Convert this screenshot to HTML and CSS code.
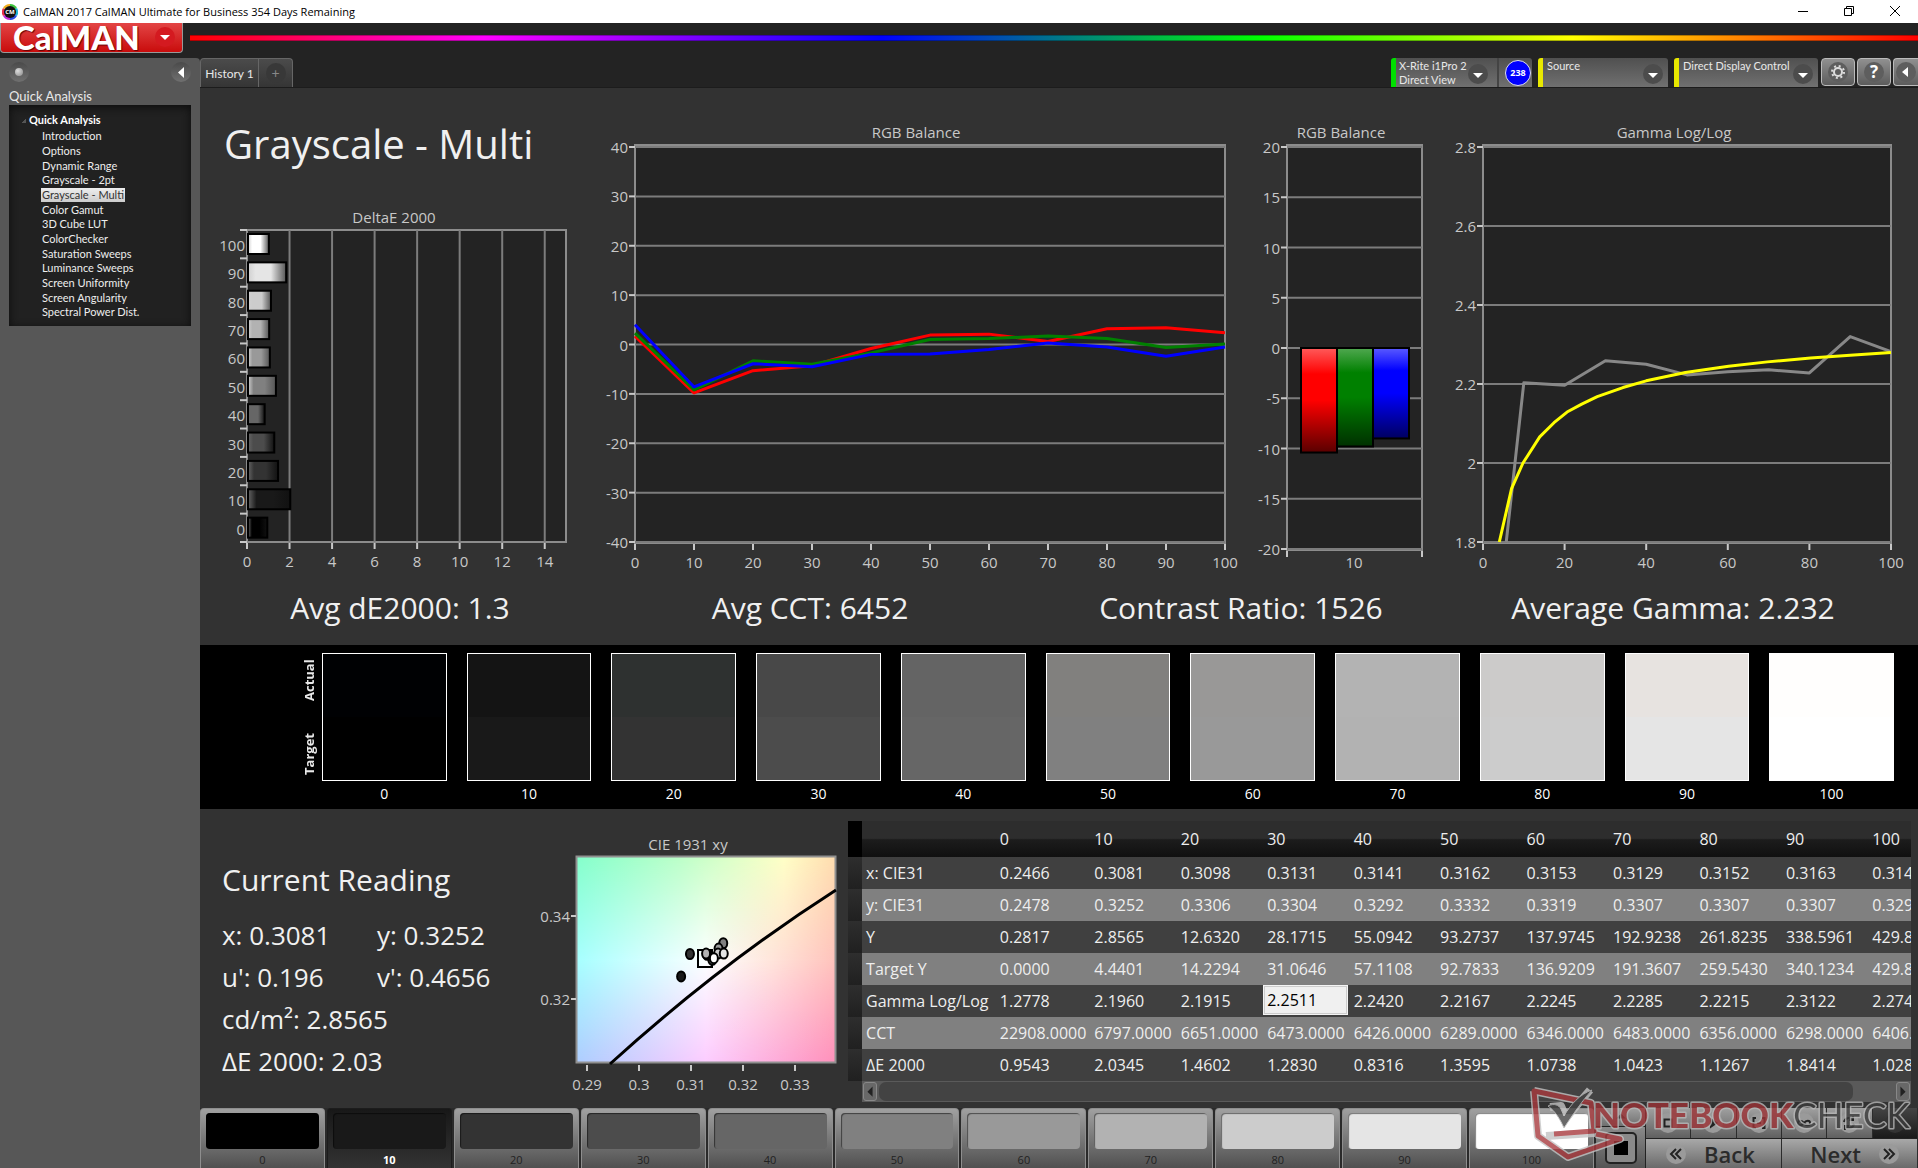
FILE: index.html
```
<!DOCTYPE html>
<html lang="en">

<head>
  <meta charset="UTF-8">
  <meta name="viewport" content="width=device-width, initial-scale=1.0">
  <title>CalMAN 2017</title>
  <link rel="stylesheet" href="styles.css">
</head>

<body>
  <header class="titlebar">
    <svg class="app-icon" viewBox="0 0 16 16">
      <path d="M8 0a8 8 0 0 1 7 4L8 8z" fill="#3fc43f"/>
      <path d="M15 4a8 8 0 0 1 0 8L8 8z" fill="#1fb5d8"/>
      <path d="M15 12a8 8 0 0 1-7 4V8z" fill="#2a4be0"/>
      <path d="M8 16a8 8 0 0 1-7-4l7-4z" fill="#c030d8"/>
      <path d="M1 12a8 8 0 0 1 0-8l7 4z" fill="#e8304a"/>
      <path d="M1 4a8 8 0 0 1 7-4v8z" fill="#f0b020"/>
      <circle cx="8" cy="8" r="6" fill="#111"/>
      <text x="8" y="10" text-anchor="middle" class="app-icon-text">CM</text>
    </svg>
    <span class="titlebar-text">CalMAN 2017 CalMAN Ultimate for Business 354 Days Remaining</span>
    <div class="window-buttons">
      <button class="window-btn" aria-label="Minimize"><svg viewBox="0 0 12 12"><path d="M1 6.5h10" stroke="#000"/></svg></button>
      <button class="window-btn" aria-label="Restore"><svg viewBox="0 0 12 12"><path d="M1.500 3.500h7v7h-7zM3.500 3.500v-2h7v7h-2" fill="none" stroke="#000"/></svg></button>
      <button class="window-btn" aria-label="Close"><svg viewBox="0 0 12 12"><path d="M1 1l10 10M11 1L1 11" stroke="#000"/></svg></button>
    </div>
  </header>

  <div class="brandbar">
    <button class="brand-btn">CalMAN
      <span class="brand-arrow"><svg viewBox="0 0 20 20"><path d="M5 8h10l-5 5z" fill="#fff"/></svg></span>
    </button>
    <div class="rainbow"></div>
  </div>

  <div class="app">
    <aside class="sidebar">
      <div class="sidebar-tools">
        <button class="round-btn" aria-label="Pin"><span class="pin-dot"></span></button>
        <button class="round-btn" aria-label="Collapse"><svg viewBox="0 0 20 20"><path d="M13 5v11l-6-5.500z" fill="#fff"/></svg></button>
      </div>
      <h2 class="sidebar-title">Quick Analysis</h2>
      <nav class="tree">
        <p class="tree-root">Quick Analysis</p>
        <ul class="tree-list">
          <li><a href="#">Introduction</a></li>
          <li><a href="#">Options</a></li>
          <li><a href="#">Dynamic Range</a></li>
          <li><a href="#">Grayscale - 2pt</a></li>
          <li><a href="#" class="active">Grayscale - Multi</a></li>
          <li><a href="#">Color Gamut</a></li>
          <li><a href="#">3D Cube LUT</a></li>
          <li><a href="#">ColorChecker</a></li>
          <li><a href="#">Saturation Sweeps</a></li>
          <li><a href="#">Luminance Sweeps</a></li>
          <li><a href="#">Screen Uniformity</a></li>
          <li><a href="#">Screen Angularity</a></li>
          <li><a href="#">Spectral Power Dist.</a></li>
        </ul>
      </nav>
    </aside>

    <main class="main">
      <div class="tabbar">
        <button class="tab">History 1</button>
        <button class="tab tab-add" aria-label="Add tab"><span>+</span></button>
        <div class="devices">
          <button class="device device-meter">
            <span class="device-name">X-Rite i1Pro 2<br>Direct View</span>
            <svg class="arrow" viewBox="0 0 20 20"><circle cx="10" cy="10" r="10"/><path d="M5 9h10l-5 5z"/></svg>
          </button>
          <div class="device-count"><span>238</span></div>
          <button class="device device-source">
            <span class="device-name">Source</span>
            <svg class="arrow" viewBox="0 0 20 20"><circle cx="10" cy="10" r="10"/><path d="M5 9h10l-5 5z"/></svg>
          </button>
          <button class="device device-display">
            <span class="device-name">Direct Display Control</span>
            <svg class="arrow" viewBox="0 0 20 20"><circle cx="10" cy="10" r="10"/><path d="M5 9h10l-5 5z"/></svg>
          </button>
          <button class="tool-btn" aria-label="Settings"><svg viewBox="0 0 20 20"><circle class="tool-bg" cx="10" cy="10" r="10"/><circle cx="10" cy="10" r="4" fill="none" stroke="#ddd" stroke-width="2"/><circle cx="10" cy="10" r="6" fill="none" stroke="#ddd" stroke-width="2" stroke-dasharray="2 2.712"/></svg></button>
          <button class="tool-btn tool-help" aria-label="Help"><span>?</span></button>
          <button class="tool-btn tool-last" aria-label="Collapse panel"><svg viewBox="0 0 20 20"><circle class="tool-bg" cx="10" cy="10" r="10"/><path d="M12 5v10l-6-5z" fill="#fff"/></svg></button>
        </div>
      </div>

      <section class="charts">
        <div class="chart-col">
          <h1 class="page-title">Grayscale - Multi</h1>
          <svg class="chart" id="deltaChart" viewBox="0 0 390 385"></svg>
        </div>
        <svg class="chart chart-tall" id="rgbChart" viewBox="0 0 660 465"></svg>
        <svg class="chart chart-tall" id="rgbBars" viewBox="0 0 180 465"></svg>
        <svg class="chart chart-tall" id="gammaChart" viewBox="0 0 488 465"></svg>
      </section>

      <section class="stats">
        <p>Avg dE2000: 1.3</p>
        <p>Avg CCT: 6452</p>
        <p>Contrast Ratio: 1526</p>
        <p>Average Gamma: 2.232</p>
      </section>

      <section class="swatches">
        <div class="swatch-side"><span>Actual</span><span>Target</span></div>
        <div class="swatch-row" id="swatchRow"></div>
      </section>

      <section class="bottom">
        <div class="reading">
          <h2>Current Reading</h2>
          <div class="reading-grid">
            <div>x: 0.3081</div>
            <div>y: 0.3252</div>
            <div>u': 0.196</div>
            <div>v': 0.4656</div>
            <div class="wide">cd/m²: 2.8565</div>
            <div class="wide">ΔE 2000: 2.03</div>
          </div>
        </div>

        <svg class="chart" id="cieChart" viewBox="0 0 313 299">
          <defs>
            <linearGradient id="cieTop"><stop offset="0" stop-color="#84ffcb"/><stop offset=".4" stop-color="#bbffc8"/><stop offset=".8" stop-color="#ffffc6"/><stop offset="1" stop-color="#ffdcae"/></linearGradient>
            <linearGradient id="cieMid"><stop offset="0" stop-color="#a6ffff"/><stop offset=".5" stop-color="#fcffff"/><stop offset=".75" stop-color="#ffe6dc"/><stop offset="1" stop-color="#ffc3bc"/></linearGradient>
            <linearGradient id="cieLow"><stop offset="0" stop-color="#adcdff"/><stop offset=".5" stop-color="#fcccff"/><stop offset="1" stop-color="#ff8fba"/></linearGradient>
            <linearGradient id="fadeDown" x2="0" y2="1"><stop offset="0" stop-color="#fff"/><stop offset=".5" stop-color="#000"/></linearGradient>
            <linearGradient id="fadeUp" x2="0" y2="1"><stop offset=".5" stop-color="#000"/><stop offset="1" stop-color="#fff"/></linearGradient>
            <mask id="maskTop"><rect x="41" y="47" width="260" height="207" fill="url(#fadeDown)"/></mask>
            <mask id="maskLow"><rect x="41" y="47" width="260" height="207" fill="url(#fadeUp)"/></mask>
          </defs>
          <rect x="41" y="47" width="260" height="207" fill="url(#cieMid)"/>
          <rect x="41" y="47" width="260" height="207" fill="url(#cieTop)" mask="url(#maskTop)"/>
          <rect x="41" y="47" width="260" height="207" fill="url(#cieLow)" mask="url(#maskLow)"/>
          <rect x="41.500" y="47.500" width="259" height="206" fill="none" stroke="#909090" stroke-width="2"/>
          <path d="M75 255Q184 156 301 81" fill="none" stroke="#000" stroke-width="3"/>
        </svg>

        <div class="data-panel">
          <div class="table-scroll">
            <table class="data-table">
              <thead>
                <tr><th class="gutter"></th><th class="name"></th><th class="first">0</th><th>10</th><th>20</th><th>30</th><th>40</th><th>50</th><th>60</th><th>70</th><th>80</th><th>90</th><th>100</th></tr>
              </thead>
              <tbody>
                <tr><td class="gutter"></td><th scope="row">x: CIE31</th><td>0.2466</td><td>0.3081</td><td>0.3098</td><td>0.3131</td><td>0.3141</td><td>0.3162</td><td>0.3153</td><td>0.3129</td><td>0.3152</td><td>0.3163</td><td>0.3144</td></tr>
                <tr><td class="gutter"></td><th scope="row">y: CIE31</th><td>0.2478</td><td>0.3252</td><td>0.3306</td><td>0.3304</td><td>0.3292</td><td>0.3332</td><td>0.3319</td><td>0.3307</td><td>0.3307</td><td>0.3307</td><td>0.3296</td></tr>
                <tr><td class="gutter"></td><th scope="row">Y</th><td>0.2817</td><td>2.8565</td><td>12.6320</td><td>28.1715</td><td>55.0942</td><td>93.2737</td><td>137.9745</td><td>192.9238</td><td>261.8235</td><td>338.5961</td><td>429.8232</td></tr>
                <tr><td class="gutter"></td><th scope="row">Target Y</th><td>0.0000</td><td>4.4401</td><td>14.2294</td><td>31.0646</td><td>57.1108</td><td>92.7833</td><td>136.9209</td><td>191.3607</td><td>259.5430</td><td>340.1234</td><td>429.8232</td></tr>
                <tr><td class="gutter"></td><th scope="row">Gamma Log/Log</th><td>1.2778</td><td>2.1960</td><td>2.1915</td><td class="selected"><input class="cell-input" type="text" value="2.2511" aria-label="Gamma at 30"></td><td>2.2420</td><td>2.2167</td><td>2.2245</td><td>2.2285</td><td>2.2215</td><td>2.3122</td><td>2.2749</td></tr>
                <tr><td class="gutter"></td><th scope="row">CCT</th><td>22908.0000</td><td>6797.0000</td><td>6651.0000</td><td>6473.0000</td><td>6426.0000</td><td>6289.0000</td><td>6346.0000</td><td>6483.0000</td><td>6356.0000</td><td>6298.0000</td><td>6406.0000</td></tr>
                <tr><td class="gutter"></td><th scope="row">ΔE 2000</th><td>0.9543</td><td>2.0345</td><td>1.4602</td><td>1.2830</td><td>0.8316</td><td>1.3595</td><td>1.0738</td><td>1.0423</td><td>1.1267</td><td>1.8414</td><td>1.0286</td></tr>
              </tbody>
            </table>
          </div>
          <div class="hscroll">
            <button class="hscroll-btn" aria-label="Scroll left"><svg viewBox="0 0 14 18"><path d="M10 3v12L4 9z"/></svg></button>
            <div class="hscroll-track"><div class="hscroll-thumb"></div></div>
            <button class="hscroll-btn" aria-label="Scroll right"><svg viewBox="0 0 14 18"><path d="M4 3v12l6-6z"/></svg></button>
          </div>
        </div>
      </section>

      <footer class="footer">
        <div class="patterns" id="patterns"></div>
        <div class="side-buttons">
          <button class="side-up" aria-label="Up"><svg viewBox="0 0 20 20"><path d="M4 13l6-6 6 6z"/></svg></button>
          <button class="side-stop" aria-label="Stop pattern"><svg viewBox="0 0 32 32"><rect x="1" y="1" width="30" height="30" rx="4" fill="#8a8a8a" stroke="#222" stroke-width="2"/><rect x="9" y="9" width="14" height="14" fill="#000"/></svg></button>
        </div>
        <div class="controls">
          <div class="transport">
            <button aria-label="Stop"><svg viewBox="0 0 20 20"><circle cx="10" cy="10" r="10"/><path d="M6.500 6.500h7v7h-7z" class="line"/></svg></button>
            <button aria-label="Play"><svg viewBox="0 0 20 20"><circle cx="10" cy="10" r="10"/><path d="M7 4.500l8 5.500-8 5.500z"/></svg></button>
            <button aria-label="Read series"><svg viewBox="0 0 20 20"><circle cx="10" cy="10" r="10"/><path d="M7 5H4.500v10H7M13 5h2.500v10H13M8 10h4" class="line"/></svg></button>
            <button aria-label="Continuous"><svg viewBox="0 0 20 20"><circle cx="10" cy="10" r="10"/><path d="M10 10c-2-3-6-3-6 0s4 3 6 0 6-3 6 0-4 3-6 0z" class="line"/></svg></button>
            <button aria-label="Refresh"><svg viewBox="0 0 20 20"><circle cx="10" cy="10" r="10"/><path d="M5 9c1-5 8-5 9-2M14 3v4h-4M15 11c-1 5-8 5-9 2M6 17v-4h4" class="line"/></svg></button>
            <button class="off" aria-label="Record" disabled><svg viewBox="0 0 20 20"><circle cx="10" cy="10" r="10"/></svg></button>
          </div>
          <div class="paging">
            <button><svg viewBox="0 0 20 20"><circle cx="10" cy="10" r="10"/><path d="M10 5l-5 5 5 5M15 5l-5 5 5 5" class="line"/></svg>Back</button>
            <button class="next">Next<svg viewBox="0 0 20 20"><circle cx="10" cy="10" r="10"/><path d="M5 5l5 5-5 5M10 5l5 5-5 5" class="line"/></svg></button>
          </div>
        </div>

        <svg class="watermark" viewBox="0 0 390 80">
          <g class="mark-shadow">
            <path d="M6 8l57 12 3 30-48 3M6 8l4 45 30 21 52-18-24-5"/>
            <path d="M22 24l11-1 5 12L62 7"/>
          </g>
          <path class="mark-box" d="M26 51l40-3-3-28L6 8l4 45 30 21 52-18-24-5"/>
          <path class="mark-check" d="M20 23c6-3 11-1 13 3l3 7C42 22 52 11 64 7 54 18 46 30 36 45 32 36 27 28 20 23z"/>
          <text x="65" y="45"><tspan class="mark-red">NOTEBOOK</tspan><tspan class="mark-dark">CHECK</tspan></text>
        </svg>
      </footer>
    </main>
  </div>

  <script src="charts.js"></script>
</body>

</html>
```
FILE: styles.css
```
* {
  box-sizing: border-box;
}

body {
  margin: 0;
  min-height: 100vh;
  display: flex;
  flex-direction: column;
  background: #232323;
  color: #e8e8e8;
  font-family: "Open Sans", "Noto Sans", sans-serif;
  font-size: 12px;
  overflow-x: hidden;
}

button {
  margin: 0;
  padding: 0;
  border: none;
  background: none;
  color: inherit;
  font-family: inherit;
  cursor: pointer;
}

h1, h2, p, ul {
  margin: 0;
  padding: 0;
  font-weight: normal;
}

/* window title bar */
.titlebar {
  display: flex;
  align-items: center;
  height: 23px;
  padding-left: 2px;
  background: #fff;
  color: #000;
}

.app-icon {
  width: 16px;
  height: 16px;
  margin-right: 5px;
}

.app-icon-text {
  font: bold 6px "Open Sans", sans-serif;
  fill: #fff;
}

.titlebar-text {
  font-family: "Open Sans", sans-serif;
  font-size: 11px;
}

.window-buttons {
  display: flex;
  margin-left: auto;
}

.window-btn {
  width: 46px;
  height: 22px;
}

.window-btn svg {
  width: 12px;
  height: 12px;
}

/* brand button and colour strip */
.brandbar {
  display: flex;
  align-items: flex-start;
  gap: 7px;
  height: 35px;
}

.brand-btn {
  display: flex;
  align-items: center;
  justify-content: space-between;
  width: 183px;
  height: 30px;
  padding: 0 7px 2px 12px;
  border: 1px solid #999;
  border-top: none;
  border-radius: 0 0 4px 4px;
  background: linear-gradient(#e34545, #c90c0c);
  color: #fff;
  font-family: Lato, sans-serif;
  font-size: 33px;
  font-weight: 900;
  line-height: 28px;
  text-shadow: 1px 1px 1px #600;
}

.brand-arrow svg {
  display: block;
  width: 20px;
  height: 20px;
  border-radius: 50%;
  background: #d41a20;
}

.rainbow {
  flex: 1;
  height: 6px;
  margin-top: 12px;
  border: 1px solid rgba(0, 0, 0, 0.3);
  border-width: 1px 0;
  background: linear-gradient(90deg, #f00, #f0f 17%, #00f 40%, #0f0 62%, #ff0 80%, #f00);
}

.app {
  flex: 1;
  display: flex;
}

/* sidebar */
.sidebar {
  width: 200px;
  flex-shrink: 0;
  padding: 4px 9px;
  border-radius: 0 4px 0 0;
  background: #575757;
  font-family: Lato, sans-serif;
}

.sidebar-tools {
  display: flex;
  justify-content: space-between;
}

.round-btn {
  display: flex;
  align-items: center;
  justify-content: center;
  width: 20px;
  height: 20px;
  border-radius: 50%;
  background: linear-gradient(#4a4a4a, #707070);
}

.round-btn svg {
  width: 20px;
}

.pin-dot {
  width: 8px;
  height: 8px;
  border-radius: 50%;
  background: radial-gradient(circle at 35% 35%, #ddd, #888);
}

.sidebar-title {
  margin-top: 5px;
  font-size: 13px;
  line-height: 18px;
}

.tree {
  height: 221px;
  padding: 6px 0 0 8px;
  background: #212121;
  box-shadow: inset 0 2px 8px #0c0c0c;
}

.tree-root {
  padding-left: 12px;
  font-size: 11px;
  font-weight: bold;
  line-height: 17px;
  color: #fff;
  background: linear-gradient(135deg, transparent 50%, #555 50%) 4px 7px / 5px 5px no-repeat;
}

.tree-list {
  list-style: none;
  padding-left: 24px;
}

.tree-list li {
  height: 15px;
  line-height: 15px;
}

.tree-list li:nth-child(3n) {
  height: 14px;
}

.tree-list a {
  display: inline-block;
  padding: 0 1px;
  color: #eee;
  font-size: 11px;
  line-height: 14px;
  text-decoration: none;
}

.tree-list .active {
  background: linear-gradient(#eee, #ccc);
  color: #333;
}

/* tab bar */
.main {
  flex: 1;
  min-width: 0;
  background: #323232;
}

.tabbar {
  display: flex;
  height: 30px;
  border-bottom: 1px solid #1c1c1c;
  background: #232323;
}

.tab {
  width: 59px;
  border: 1px solid #666;
  border-bottom: none;
  border-radius: 4px 0 0 0;
  background: linear-gradient(#4b4b4b, #353535);
  font-family: Lato, sans-serif;
  font-size: 12px;
}

.tab-add {
  width: 34px;
  border-left: none;
  border-radius: 0 4px 0 0;
}

.tab-add span {
  display: inline-block;
  width: 20px;
  border-radius: 50%;
  background: #383838;
  color: #888;
  font-size: 14px;
  line-height: 20px;
}

.devices {
  display: flex;
  margin-left: auto;
}

.device {
  display: flex;
  align-items: flex-start;
  justify-content: space-between;
  padding: 1px 5px 0 4px;
  border-left: 5px solid #e8e800;
  border-radius: 3px 3px 0 0;
  background: linear-gradient(#505050, #707070);
  text-align: left;
  font-family: Lato, sans-serif;
  font-size: 11px;
  line-height: 14px;
  white-space: nowrap;
}

.device-meter {
  width: 106px;
  padding: 1px 9px 0 3px;
  border-left-color: #00e000;
  border-radius: 3px 0 0 0;
}

.device-count {
  width: 35px;
  margin-right: 6px;
  padding: 2px 0 0 6px;
  border-left: 2px solid #444;
  border-radius: 0 3px 0 0;
  background: linear-gradient(#505050, #707070);
}

.device-count span {
  display: block;
  width: 26px;
  height: 26px;
  border: 1px solid #dde;
  border-radius: 50%;
  background: #00f;
  color: #fff;
  font-size: 9px;
  font-weight: bold;
  line-height: 24px;
  text-align: center;
}

.device-source {
  width: 130px;
  margin-right: 6px;
}

.device-display {
  width: 144px;
  margin-right: 3px;
}

.arrow {
  flex-shrink: 0;
  width: 20px;
  height: 20px;
  margin-top: 5px;
}

.arrow circle {
  fill: #4c4c4c;
}

.arrow path {
  fill: #fff;
}

.tool-btn {
  width: 34px;
  height: 28px;
  margin-right: 2px;
  border: 1px solid #bbb;
  border-radius: 4px;
  background: linear-gradient(#909090, #5c5c5c);
}

.tool-btn svg {
  display: block;
  width: 20px;
  margin: 0 auto;
}

.tool-bg {
  fill: #5e5e5e;
}

.tool-help span {
  display: block;
  width: 20px;
  margin: 0 auto;
  border-radius: 50%;
  background: #5e5e5e;
  color: #fff;
  font-size: 17px;
  font-weight: bold;
  line-height: 20px;
}

.tool-last {
  width: 25px;
  margin-right: 0;
  border-right: none;
  border-radius: 4px 0 0 4px;
}

/* charts */
.charts {
  display: grid;
  grid-template-columns: 390fr 660fr 180fr 488fr;
}

.page-title {
  padding: 28px 0 0 24px;
  height: 112px;
  font-size: 40px;
  line-height: 56px;
  color: #f0f0f0;
  white-space: nowrap;
}

.chart {
  display: block;
  width: 100%;
}

.chart-tall {
  padding-top: 32px;
}

.chart text {
  font-size: 15px;
  fill: #c8c8c8;
}

.plot-bg {
  fill: #232323;
  stroke: #8c8c8c;
  stroke-width: 2;
}

.grid-line {
  stroke: #7c7c7c;
  stroke-width: 2;
}

.tick {
  stroke: #c8c8c8;
  stroke-width: 2;
}

.series {
  fill: none;
  stroke-width: 3;
  stroke-linejoin: round;
}

.stats {
  display: grid;
  grid-template-columns: 400fr 420fr 442fr 422fr 34fr;
  height: 60px;
  color: #f0f0f0;
  font-size: 30px;
  line-height: 46px;
  text-align: center;
}

/* actual / target swatches */
.swatches {
  display: flex;
  height: 164px;
  padding: 8px 24px 0 100px;
  background: #000;
}

.swatch-side {
  display: flex;
  flex-direction: row-reverse;
  justify-content: space-between;
  width: 22px;
  height: 128px;
  padding: 6px 0;
  font-size: 13px;
  font-weight: bold;
  line-height: 18px;
  writing-mode: vertical-rl;
  transform: rotate(180deg);
}

.swatch-row {
  flex: 1;
  display: grid;
  grid-template-columns: repeat(11, 1fr);
  gap: 20px;
}

.swatch {
  text-align: center;
  font-size: 14px;
  line-height: 26px;
  color: #fff;
}

.swatch-box {
  height: 128px;
  border: 1px solid #fff;
}

.swatch-box div {
  height: 50%;
}

/* readings, CIE chart, data table */
.bottom {
  display: grid;
  grid-template-columns: 335fr 313fr 1070fr;
  height: 299px;
}

.reading {
  padding: 49px 0 0 22px;
  color: #f0f0f0;
}

.reading h2 {
  font-size: 30px;
  line-height: 44px;
}

.reading-grid {
  display: grid;
  grid-template-columns: 155px 1fr;
  margin-top: 12px;
  font-size: 26px;
  line-height: 42px;
}

.wide {
  grid-column: span 2;
}

.cie-point {
  stroke: #000;
  stroke-width: 2;
}

.data-panel {
  min-width: 0;
  padding: 12px 7px 0 0;
}

.table-scroll {
  overflow: hidden;
}

.data-table {
  width: 1107px;
  border-collapse: collapse;
  table-layout: fixed;
  color: #eee;
  font-size: 16px;
}

.data-table th,
.data-table td {
  width: 86px;
  height: 32px;
  padding: 0 0 0 4px;
  font-weight: normal;
  text-align: left;
  white-space: nowrap;
}

.data-table thead th {
  height: 36px;
  background: linear-gradient(#2d2d2d 48%, #1c1c1c 52%, #101010);
}

.data-table .name {
  width: 133px;
}

.data-table .first {
  width: 94px;
}

.data-table tbody tr {
  background: #404040;
}

.data-table tbody tr:nth-child(even) {
  background: #808080;
}

.data-table .gutter {
  width: 14px;
  padding: 0;
  background: linear-gradient(#2e2e2e, #202020);
}

.data-table thead .gutter {
  background: #000;
}

.data-table .selected {
  padding: 0 2px 2px 0;
}

.cell-input {
  display: block;
  width: 100%;
  height: 30px;
  padding: 0 0 0 2px;
  border: 2px solid #ccc;
  outline: 1px solid #f4f4f4;
  outline-offset: -1px;
  background: #f0f0f0;
  color: #000;
  font-family: inherit;
  font-size: 16px;
}

.hscroll {
  display: flex;
  height: 21px;
  margin-left: 14px;
  padding: 1px;
  background: #5a5a5a;
}

.hscroll-btn {
  width: 14px;
  border: 1px solid #888;
  border-radius: 3px;
  background: #686868;
}

.hscroll-btn svg {
  display: block;
  width: 12px;
  fill: #222;
}

.hscroll-track {
  flex: 1;
  padding: 0 2px;
}

.hscroll-thumb {
  width: 96%;
  height: 19px;
  border-radius: 7px;
  background: #434343;
}

/* pattern strip and controls */
.footer {
  position: relative;
  display: flex;
  height: 60px;
  background: #2a2a2a;
}

.patterns {
  flex: 1;
  display: grid;
  grid-template-columns: repeat(11, 1fr);
  gap: 2px;
  padding-right: 2px;
}

.pattern {
  display: flex;
  flex-direction: column;
  padding: 4px 5px 0 5px;
  border: 1px solid #8e8e8e;
  border-bottom: none;
  border-radius: 4px 4px 0 0;
  background: linear-gradient(#a0a0a0, #4c4c4c);
  color: #222;
  font-size: 11px;
  line-height: 22px;
}

.pattern-color {
  display: block;
  width: 100%;
  height: 36px;
  border-radius: 4px;
  box-shadow: inset 1px 1px 1px rgba(0, 0, 0, 0.5);
}

.pattern-label {
  width: 100%;
}

.pattern.current {
  border-color: #1c1c1c;
  background: linear-gradient(#181818, #343434);
  color: #fff;
  font-weight: bold;
}

.side-buttons {
  display: flex;
  flex-direction: column;
  width: 50px;
  border-right: 1px solid #222;
}

.side-up {
  height: 19px;
  border-bottom: 1px solid #222;
  background: linear-gradient(#a0a0a0, #707070);
}

.side-up svg {
  width: 16px;
  fill: #333;
}

.side-stop {
  flex: 1;
  background: linear-gradient(#8a8a8a, #555);
}

.side-stop svg {
  display: block;
  width: 32px;
  margin: 0 auto;
}

.controls {
  width: 272px;
}

.transport {
  display: grid;
  grid-template-columns: repeat(6, 1fr);
  height: 30px;
}

.transport button {
  border-right: 1px solid #2c2c2c;
  background: linear-gradient(#a0a0a0, #606060);
}

.transport svg {
  display: block;
  width: 20px;
  margin: 0 auto;
  fill: #222;
}

.controls circle {
  fill: #9a9a9a;
}

.controls .line {
  fill: none;
  stroke: #222;
  stroke-width: 2;
}

.transport .off {
  background: linear-gradient(#444, #1a1a1a);
}

.transport .off circle {
  fill: #333;
}

.paging {
  display: grid;
  grid-template-columns: 1fr 1fr;
  height: 30px;
}

.paging button {
  display: flex;
  align-items: center;
  gap: 18px;
  padding: 0 18px 0 20px;
  border-top: 1px solid #222;
  border-right: 1px solid #2c2c2c;
  background: linear-gradient(#a8a8a8, #6a6a6a);
  color: #2b2b2b;
  font-size: 22px;
  font-weight: 600;
  line-height: 28px;
}

.paging .next {
  justify-content: flex-end;
}

.paging svg {
  width: 20px;
}

.watermark {
  position: absolute;
  right: 0;
  bottom: 5px;
  width: 390px;
  height: 80px;
  pointer-events: none;
  opacity: 0.8;
}

.watermark text {
  font-family: Lato, sans-serif;
  font-size: 35px;
  paint-order: stroke;
  stroke: #b8b8b8;
  stroke-width: 3;
  stroke-linejoin: round;
}

.mark-red {
  fill: #9c3236;
  font-weight: 900;
}

.mark-dark {
  fill: #3c3c3c;
  font-weight: normal;
}

.mark-shadow path {
  fill: none;
  stroke: #c4c4c4;
  stroke-width: 8;
  stroke-linejoin: round;
}

.mark-box {
  fill: none;
  stroke: #a83a3e;
  stroke-width: 5;
  stroke-linejoin: round;
}

.mark-check {
  fill: #444;
  stroke: #bbb;
  stroke-width: 1;
}
```
FILE: charts.js
```
var NS = "http://www.w3.org/2000/svg";
var levels = [0, 10, 20, 30, 40, 50, 60, 70, 80, 90, 100];
var grays = ["#000000", "#191919", "#333333", "#4c4c4c", "#666666", "#808080", "#999999", "#b2b2b2", "#cccccc", "#e5e5e5", "#ffffff"];
var actual = ["#000103", "#141414", "#2e3130", "#484848", "#646464", "#81807e", "#999897", "#b3b3b3", "#cccbca", "#e7e3e0", "#fffefd"];

function add(svg, name, attrs, text) {
  var el = document.createElementNS(NS, name);
  for (var key in attrs) el.setAttribute(key, attrs[key]);
  if (text !== undefined) el.textContent = text;
  svg.appendChild(el);
  return el;
}

function line(svg, cls, x1, y1, x2, y2) {
  add(svg, "line", { "class": cls, x1: x1, y1: y1, x2: x2, y2: y2 });
}

function label(svg, x, y, anchor, text) {
  add(svg, "text", { x: x, y: y, "text-anchor": anchor }, text);
}

// maps a value from [a, b] to pixels [p, q]
function scale(a, b, p, q) {
  return function (v) { return p + (v - a) / (b - a) * (q - p); };
}

function frame(svg, left, top, right, bottom) {
  add(svg, "rect", { "class": "plot-bg", x: left, y: top, width: right - left, height: bottom - top });
}

function gradient(svg, id, vertical, stops) {
  var g = add(svg, "linearGradient", vertical ? { id: id, x2: 0, y2: 1 } : { id: id });
  stops.forEach(function (s) { add(g, "stop", { offset: s[0], "stop-color": s[1] }); });
}

function series(svg, color, points, x, y) {
  add(svg, "polyline", {
    "class": "series",
    stroke: color,
    points: points.map(function (p) { return x(p[0]) + "," + y(p[1]); }).join(" ")
  });
}

function yAxis(svg, ticks, y, left, right) {
  ticks.forEach(function (t) {
    line(svg, "grid-line", left, y(t), right, y(t));
    line(svg, "tick", left - 6, y(t), left, y(t));
    label(svg, left - 7, y(t) + 6, "end", t);
  });
}

function xAxis(svg, ticks, x, bottom) {
  ticks.forEach(function (t) {
    line(svg, "tick", x(t), bottom + 1, x(t), bottom + 7);
    label(svg, x(t), bottom + 25, "middle", t);
  });
}

function drawDelta() {
  var svg = document.getElementById("deltaChart");
  var values = [0.9543, 2.0345, 1.4602, 1.283, 0.8316, 1.3595, 1.0738, 1.0423, 1.1267, 1.8414, 1.0286];
  var x = scale(0, 15, 47, 366);
  var step = (342 - 30) / 11;
  label(svg, 194, 23, "middle", "DeltaE 2000");
  frame(svg, 47, 30, 366, 342);
  [2, 4, 6, 8, 10, 12, 14].forEach(function (t) { line(svg, "grid-line", x(t), 30, x(t), 342); });
  xAxis(svg, [0, 2, 4, 6, 8, 10, 12, 14], x, 342);
  for (var i = 0; i <= 11; i++) line(svg, "tick", 40, 30 + i * step, 47, 30 + i * step);
  levels.forEach(function (level, i) {
    var top = 342 - (i + 1) * step;
    gradient(svg, "bar" + i, false, [[0, i < 5 ? "#666" : "#d0d0d0"], [0.2, grays[i]], [0.6, grays[i]], [1, i < 5 ? "#111" : "#555"]]);
    add(svg, "rect", { x: 48, y: top + 4, width: x(values[i]) - 48, height: 20, fill: "url(#bar" + i + ")", stroke: "#000", "stroke-width": 2 });
    label(svg, 45, top + 21, "end", level);
  });
}

function drawRgb() {
  var svg = document.getElementById("rgbChart");
  var x = scale(0, 100, 45, 635);
  var y = scale(40, -40, 27, 422);
  var data = {
    red: [1.7, -9.8, -5.3, -4.3, -0.8, 1.9, 2.1, 0.6, 3.2, 3.4, 2.4],
    green: [2.3, -9.2, -3.3, -4.0, -1.7, 1, 1.2, 1.7, 1.2, -0.6, 0.1],
    blue: [4, -8.6, -3.9, -4.5, -2, -1.9, -1, 0.3, -0.5, -2.4, -0.5]
  };
  label(svg, 326, 18, "middle", "RGB Balance");
  frame(svg, 45, 25, 635, 423);
  yAxis(svg, [40, 30, 20, 10, 0, -10, -20, -30, -40], y, 45, 635);
  xAxis(svg, levels, x, 423);
  ["red", "green", "blue"].forEach(function (c) {
    series(svg, c, data[c].map(function (v, i) { return [levels[i], v]; }), x, y);
  });
}

function drawBars() {
  var svg = document.getElementById("rgbBars");
  var y = scale(20, -20, 27, 429);
  label(svg, 91, 18, "middle", "RGB Balance");
  frame(svg, 37, 25, 172, 430);
  yAxis(svg, [20, 15, 10, 5, 0, -5, -10, -15, -20], y, 37, 172);
  line(svg, "tick", 37, 431, 37, 437);
  line(svg, "tick", 172, 431, 172, 437);
  label(svg, 104, 448, "middle", "10");
  [["#ff5a5a", "#ff0000", "#5a0000", -10.4], ["#50a850", "#008000", "#003000", -9.8], ["#5a5aff", "#0000ff", "#000060", -9]].forEach(function (b, i) {
    gradient(svg, "rgb" + i, true, [[0, b[0]], [0.25, b[1]], [0.5, b[1]], [1, b[2]]]);
    add(svg, "rect", { x: 51 + i * 36, y: y(0), width: 36, height: y(b[3]) - y(0), fill: "url(#rgb" + i + ")", stroke: "#000", "stroke-width": 2 });
  });
}

function drawGamma() {
  var svg = document.getElementById("gammaChart");
  var x = scale(0, 100, 53, 461);
  var y = scale(2.8, 1.8, 27, 422);
  label(svg, 244, 18, "middle", "Gamma Log/Log");
  frame(svg, 53, 25, 461, 423);
  yAxis(svg, [2.8, 2.6, 2.4, 2.2, 2, 1.8], y, 53, 461);
  xAxis(svg, [0, 20, 40, 60, 80, 100], x, 423);
  series(svg, "#888", [[5.7, 1.8], [10, 2.203], [20, 2.197], [30, 2.259], [40, 2.25], [50, 2.223], [60, 2.231], [70, 2.236], [80, 2.228], [90, 2.32], [100, 2.282]], x, y);
  series(svg, "#ff0", [[4, 1.8], [7, 1.935], [9.8, 2], [13.9, 2.066], [17.4, 2.102], [20.6, 2.129], [24.2, 2.149], [28, 2.168], [34.3, 2.191], [40, 2.208], [49.6, 2.229], [60.2, 2.245], [69.7, 2.256], [80.3, 2.266], [90, 2.273], [100, 2.28]], x, y);
}

function drawCie() {
  var svg = document.getElementById("cieChart");
  var x = scale(0.29, 0.33, 52, 260);
  var y = scale(0.34, 0.32, 107, 190);
  var points = [[0.3081, 0.3252], [0.3098, 0.3306], [0.3131, 0.3304], [0.3141, 0.3292], [0.3162, 0.3332], [0.3153, 0.3319], [0.3129, 0.3307], [0.3152, 0.3307], [0.3163, 0.3307], [0.3144, 0.3296]];
  label(svg, 153, 41, "middle", "CIE 1931 xy");
  [0.34, 0.32].forEach(function (t) {
    line(svg, "tick", 36, y(t), 41, y(t));
    label(svg, 35, y(t) + 6, "end", t);
  });
  [0.29, 0.3, 0.31, 0.32, 0.33].forEach(function (t) {
    line(svg, "tick", x(t), 256, x(t), 262);
    label(svg, x(t), 281, "middle", t);
  });
  add(svg, "rect", { x: 163, y: 141, width: 14, height: 17, fill: "none", stroke: "#000", "stroke-width": 2 });
  points.forEach(function (p, i) {
    add(svg, "ellipse", { "class": "cie-point", cx: x(p[0]), cy: y(p[1]) - 1, rx: 4, ry: 5, fill: grays[i + 1] });
  });
}

function drawSwatches() {
  var row = document.getElementById("swatchRow");
  var strip = document.getElementById("patterns");
  levels.forEach(function (level, i) {
    row.insertAdjacentHTML("beforeend",
      '<div class="swatch"><div class="swatch-box"><div style="background:' + actual[i] + '"></div><div style="background:' + grays[i] + '"></div></div>' + level + '</div>');
    strip.insertAdjacentHTML("beforeend",
      '<button class="pattern' + (level === 10 ? ' current' : '') + '"><span class="pattern-color" style="background:' + grays[i] + '"></span><span class="pattern-label">' + level + '</span></button>');
  });
}

drawDelta();
drawRgb();
drawBars();
drawGamma();
drawCie();
drawSwatches();
```
